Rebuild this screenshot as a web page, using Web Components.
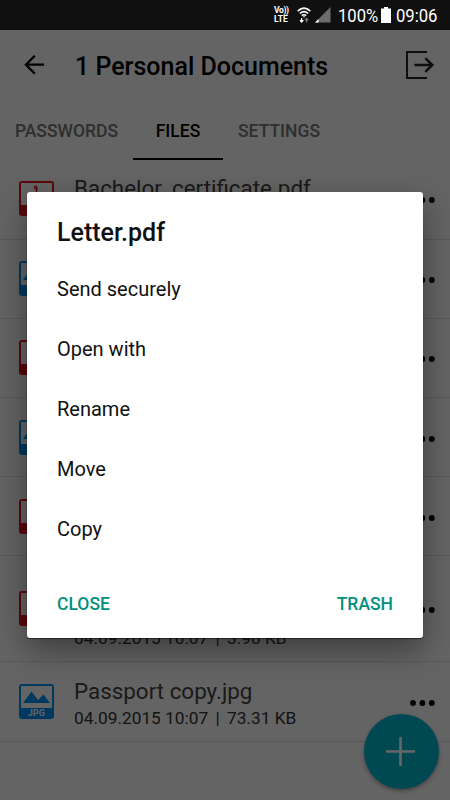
<!DOCTYPE html>
<html lang="en">
<head>
<meta charset="utf-8">
<meta name="viewport" content="width=device-width, initial-scale=1">
<title>Personal Documents</title>
<style>
    body { margin: 0; font-family: Roboto, "Liberation Sans", sans-serif; color: #000; }
    i { font-style: normal; margin: 0 3px; }
</style>
</head>
<body>
<documents-screen>
    <status-bar slot="status"></status-bar>
    <app-header slot="header">1 Personal Documents</app-header>
    <tab-bar slot="tabs">
        <tab-item style="width: 133px">PASSWORDS</tab-item>
        <tab-item style="width: 90px" active>FILES</tab-item>
        <tab-item style="width: 112px">SETTINGS</tab-item>
    </tab-bar>
    <file-row type="pdf" style="height: 79.6px; padding-bottom: 1px">Bachelor_certificate.pdf</file-row>
    <file-row type="jpg"></file-row>
    <file-row type="pdf"></file-row>
    <file-row type="jpg"></file-row>
    <file-row type="pdf"></file-row>
    <file-row type="pdf" tall><span slot="meta">04.09.2015 10:07 <i>|</i> 3.98 KB</span></file-row>
    <file-row type="jpg">Passport copy.jpg<span slot="meta">04.09.2015 10:07 <i>|</i> 73.31 KB</span></file-row>
    <add-button slot="fab"></add-button>
    <action-dialog slot="dialog">
        <span slot="title">Letter.pdf</span>
        <action-item>Send securely</action-item>
        <action-item>Open with</action-item>
        <action-item>Rename</action-item>
        <action-item>Move</action-item>
        <action-item>Copy</action-item>
        <span slot="close">CLOSE</span>
        <span slot="trash">TRASH</span>
    </action-dialog>
</documents-screen>

<script>
const define = (name, html) => {
    const template = document.createElement("template");
    template.innerHTML = html;

    customElements.define(name, class extends HTMLElement {
        constructor() {
            super();
            this.attachShadow({ mode: "open" });
            this.shadowRoot.appendChild(template.content.cloneNode(true));
        }
    });
};

define("status-bar", /*html*/`
    <style>
    :host{display: flex; box-sizing: border-box; height: 30px; padding-right: 12px; background: #101010; color: #fff;
      align-items: center; justify-content: flex-end; white-space: nowrap;}
    .volte{font-size: 8.6px; line-height: 9px; font-weight: 700; width: 16px; margin-right: 7px;}
    .volte :first-child{letter-spacing: -.4px;}
    svg{display: block; flex: none;}
    .clock, .level{font-size: 18.5px; line-height: 22px; padding-top: 1px; transform: scaleX(.9); transform-origin: left;}
    .clock{width: 42px;}
    .level{width: 40px;}
    </style>
    <div class="volte"><div>Vo))</div><div>LTE</div></div>
    <svg width="14" height="17" viewBox="0 0 14 17" fill="none" stroke="#fff" stroke-width="1.6">
      <path d="M.7 4.2Q7-1.8 13.3 4.2M2.8 6.5Q7 2.7 11.2 6.5M4.8 8.7Q7 6.8 9.2 8.7"/>
      <circle cx="7" cy="9.8" r=".8" fill="#fff" stroke="none"/>
      <path d="M4.6 11v4M2.9 13.1l1.7 2 1.7-2" stroke-width="1.2"/>
      <path d="M9.6 15.5v-4M7.9 13.4l1.7-2 1.7 2" stroke="#777" stroke-width="1.2"/>
    </svg>
    <svg width="16" height="16" viewBox="0 0 16 16" style="margin: 0 7px 0 4px">
      <path d="M15.5 0v15.5H0z" fill="#6c6c6c"/><path d="M3.5 12v3.5H0z" fill="#fff"/>
    </svg>
    <div class="level">100%</div>
    <svg width="10" height="16" viewBox="0 0 10 16" style="margin: 0 5px 0 3px"><path d="M3 0h4v1.5h3V16H0V1.5h3z" fill="#fff"/></svg>
    <div class="clock">09:06</div>
`);

define("app-header", /*html*/`
    <style>
    :host{display: flex; height: 72px; align-items: center; padding: 0 15px 0 24px;}
    .title{flex: 1; margin-left: 31px; font-size: 25px; font-weight: 500; white-space: nowrap;}
    svg{display: block;}
    </style>
    <svg width="20" height="20" viewBox="0 0 20 20" fill="none" stroke="#000" stroke-width="2.3" style="margin-top: -2px"><path d="M20 9.7H2M10.8.8L1.9 9.7l8.9 8.9"/></svg>
    <div class="title"><slot></slot></div>
    <svg width="29" height="28" viewBox="0 0 29 28" fill="none" stroke="#252525" stroke-width="2" style="margin-top: -2px">
      <path d="M21 1H1v26h20"/><path d="M8.5 14H26M19.3 7.2l7 6.8-7 6.8" stroke-width="2.5"/>
    </svg>
`);

define("tab-bar", /*html*/`
    <style>
    :host{display: flex; height: 58px;}
    </style>
    <slot></slot>
`);

define("tab-item", /*html*/`
    <style>
    :host{display: flex; box-sizing: border-box; align-items: center; justify-content: center; padding-top: 1px;
      font-size: 17.5px; font-weight: 500; color: #737373; border-bottom: 2px solid transparent; white-space: nowrap;}
    :host([active]){color: #000; border-color: #000;}
    </style>
    <slot></slot>
`);

define("documents-screen", /*html*/`
    <style>
    :host{display: flex; flex-direction: column; position: relative; width: 450px; height: 800px; overflow: hidden; background: #fafafa;}
    .scrim{position: absolute; inset: 30px 0 0; background: rgba(0, 0, 0, .6);}
    slot[name=fab]::slotted(*){position: absolute; right: 11.5px; bottom: 11.5px;}
    slot[name=dialog]::slotted(*){position: absolute; left: 27px; top: 192px;}
    </style>
    <slot name="status"></slot>
    <slot name="header"></slot>
    <slot name="tabs"></slot>
    <main><slot></slot></main>
    <slot name="fab"></slot>
    <div class="scrim"></div>
    <slot name="dialog"></slot>
`);

define("add-button", /*html*/`
    <style>
    :host{display: flex; width: 75px; height: 75px; border-radius: 50%; background: #00b4cc;
      align-items: center; justify-content: center; box-shadow: 0 2px 4px rgba(0, 0, 0, .35);}
    </style>
    <svg width="29" height="29" viewBox="0 0 29 29" stroke="#fff" stroke-width="2.6" style="margin-right: 1px"><path d="M0 14.5h29M14.5 0v29"/></svg>
`);

define("action-dialog", /*html*/`
    <style>
    :host{display: flex; flex-direction: column; box-sizing: border-box; width: 396px; height: 446px; padding: 25px 30px 19px;
      background: #fff; border-radius: 3px; box-shadow: 0 1px 1px rgba(0, 0, 0, .5), 0 12px 32px rgba(0, 0, 0, .4);}
    .title{font-size: 25px; line-height: 32px; font-weight: 500; color: #111; margin-bottom: 10px;}
    .buttons{display: flex; justify-content: space-between; margin-top: auto;
      font-size: 17.5px; line-height: 30px; font-weight: 500; color: #009080;}
    </style>
    <div class="title"><slot name="title"></slot></div>
    <slot></slot>
    <div class="buttons"><slot name="close"></slot><slot name="trash"></slot></div>
`);

define("action-item", /*html*/`
    <style>
    :host{display: flex; height: 60px; align-items: center; font-size: 20px; color: #111;}
    </style>
    <slot></slot>
`);

const icons = {
    pdf: `<rect width="35" height="35" rx="3" fill="#e0141c"/><path d="M2 2h31v22H2z" fill="#fafafa"/>
      <path d="M16.5 8.5q-1.8-3.2.2-3.2t.8 5q-.5 5-6 10M17 10q1 5 8 8" fill="none" stroke="#e0141c" stroke-width="1.5"/>`,
    jpg: `<rect width="35" height="35" rx="3" fill="#008ef0"/><path d="M2 2h31v22H2z" fill="#fafafa"/>
      <path d="M4 19L12.5 7.5 19 16l5.5-5.5L31 19z" fill="#008ef0"/>
      <text x="17.3" y="32.3" text-anchor="middle" font-size="8.8" font-weight="700" letter-spacing=".2" fill="#fafafa">JPG</text>`
};
// covered rows keep only the artwork, their label sits under the dialog
icons.jpgPlain = icons.jpg.replace(/<text.*<\/text>/, "");

class FileRow extends HTMLElement {
    constructor() {
        super();
        this.attachShadow({ mode: "open" });
    }

    connectedCallback() {
        const type = this.getAttribute("type");
        const icon = type === "jpg" && !this.textContent ? icons.jpgPlain : icons[type];
        this.shadowRoot.innerHTML = /*html*/`
            <style>
            :host{display: flex; box-sizing: border-box; height: 79.2px; padding: 0 15px 0 19px; align-items: center; border-bottom: 1px solid #dedede;}
            :host([tall]){height: 106px;}
            svg{display: block; flex: none;}
            .text{flex: 1; align-self: flex-end; margin-left: 20px; padding-bottom: 11px; white-space: nowrap;}
            .name{font-size: 22.4px; line-height: 28px; min-height: 28px; color: #424242; margin-bottom: 1px;}
            .meta{font-size: 17.3px; line-height: 24px; min-height: 24px; color: #303030;}
            </style>
            <svg width="35" height="35" viewBox="0 0 35 35">${icon}</svg>
            <div class="text"><div class="name"><slot></slot></div><div class="meta"><slot name="meta"></slot></div></div>
            <svg width="25" height="6" viewBox="0 0 25 6" style="margin-top: 3px"><circle cx="3" cy="3" r="2.9"/><circle cx="12.4" cy="3" r="2.9"/><circle cx="21.8" cy="3" r="2.9"/></svg>
        `;
    }
}

customElements.define("file-row", FileRow);
</script>
</body>
</html>
